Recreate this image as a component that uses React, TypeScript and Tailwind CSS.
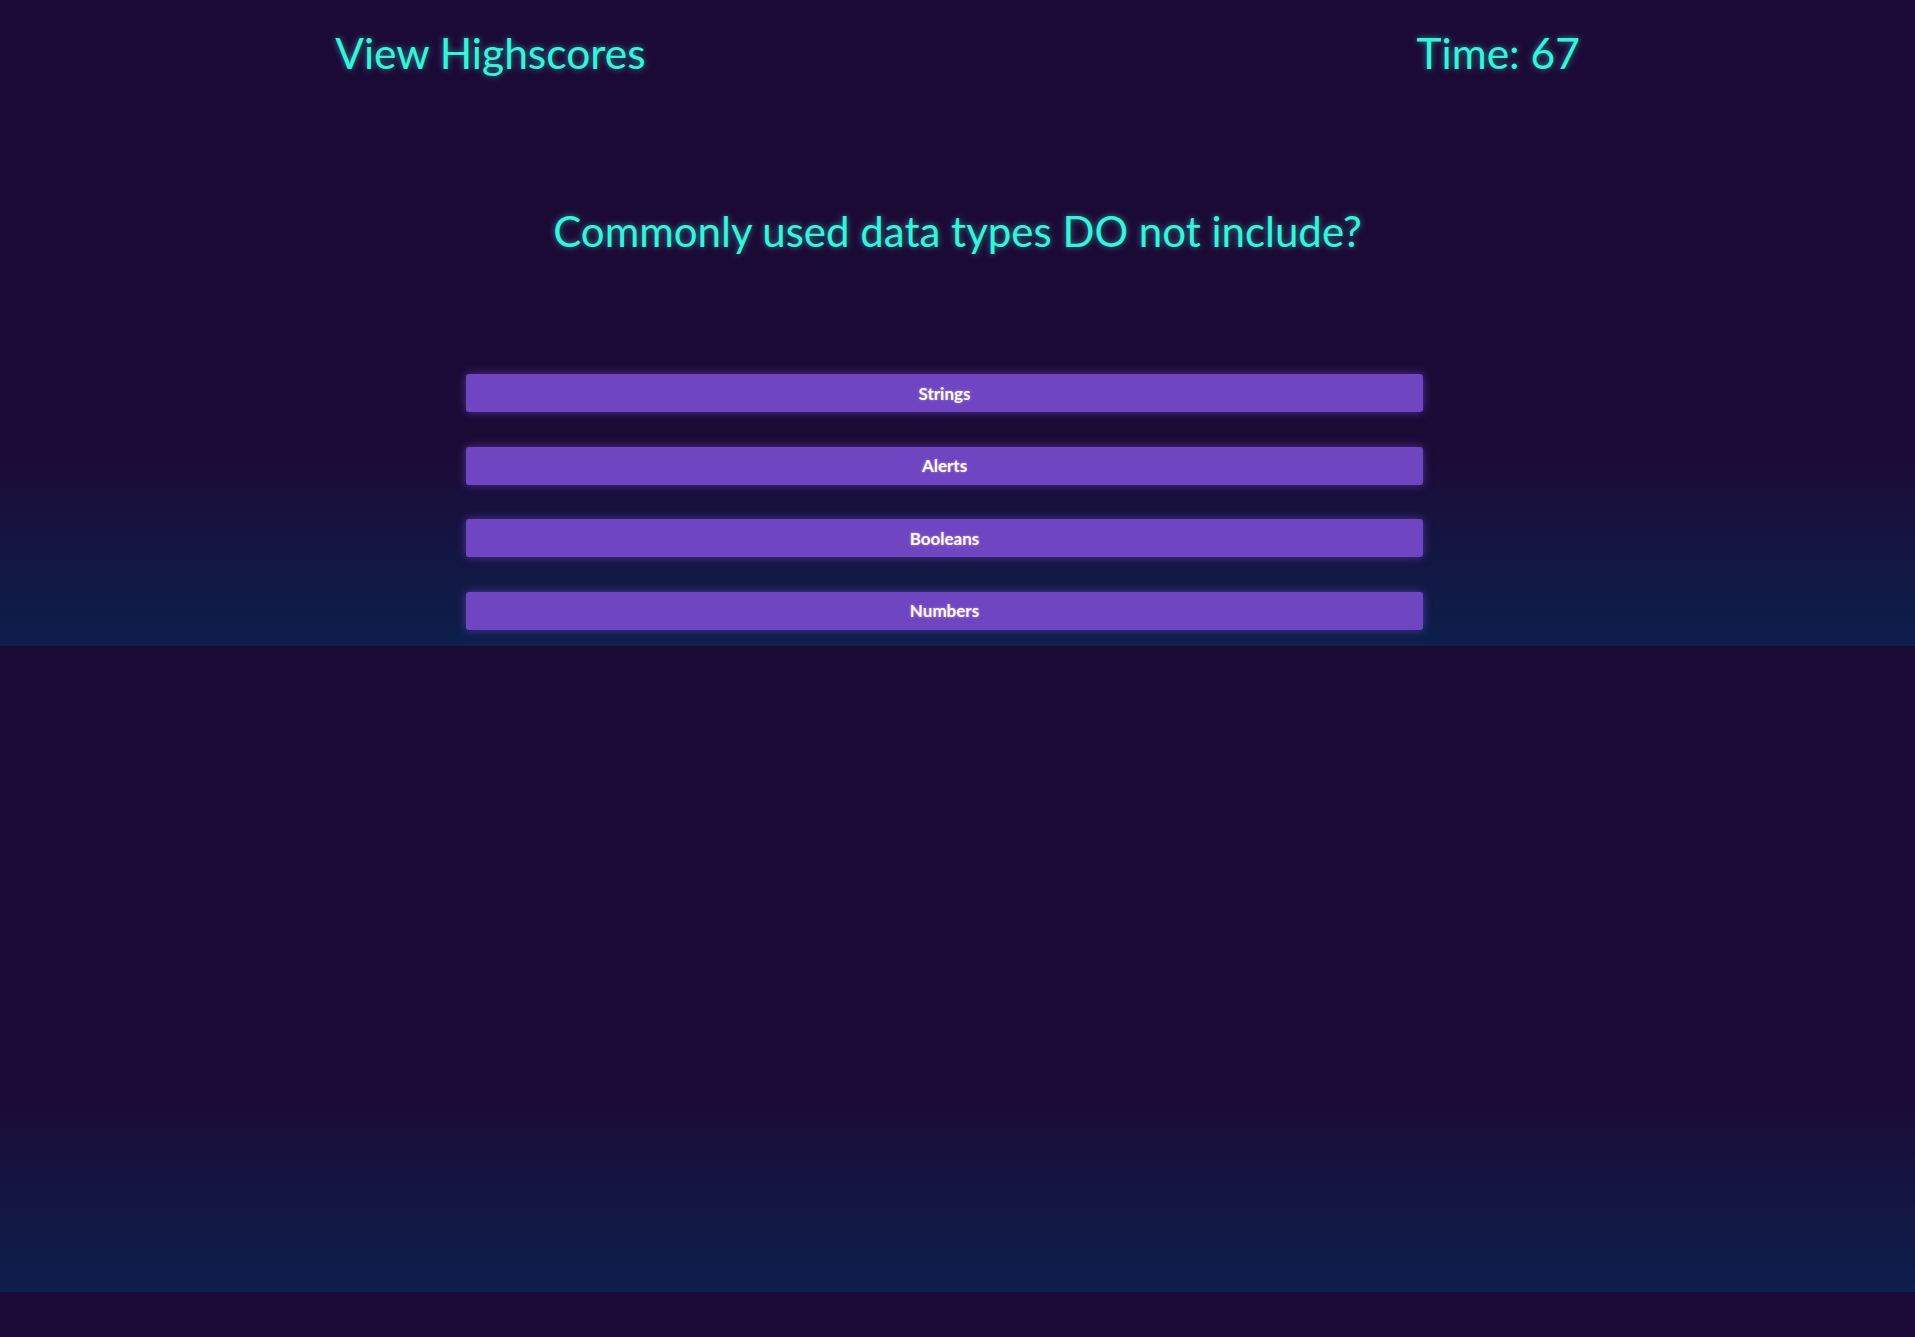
import React from "react";

const answers = ["Strings", "Alerts", "Booleans", "Numbers"];

export default function App() {
  return (
    <div
      className="min-h-screen w-full bg-[#1b0a35] bg-[linear-gradient(to_bottom,#1c0a36_0%,#1c0a36_68%,#0d1f4b_100%)] bg-[length:100%_646px] bg-repeat"
      style={{ fontFamily: "Lato, 'Open Sans', sans-serif" }}
    >
      <div className="h-[646px] flex flex-col">
        <header className="mx-auto w-[65%] flex justify-between pt-[27px] text-[42.5px] leading-[1.2] text-[#36f4dc] [text-shadow:0_0_6px_rgba(54,244,220,0.55)]">
          <a className="cursor-pointer">View Highscores</a>
          <span>Time: 67</span>
        </header>
        <h1 className="mt-[128px] text-center text-[42px] leading-[1.2] font-normal text-[#36f4dc] [text-shadow:0_0_6px_rgba(54,244,220,0.55)]">
          Commonly used data types DO not include?
        </h1>
        <div className="mt-[118px] ml-[calc(25%-13px)] w-1/2 flex flex-col gap-[34.5px]">
          {answers.map((a) => (
            <button
              key={a}
              className="h-[38px] w-full rounded-[3px] bg-[#7045c1] text-white font-bold text-[17px] shadow-[0_0_10px_rgba(125,80,220,0.55)] [text-shadow:0_0_3px_rgba(255,200,255,0.5)]"
            >
              {a}
            </button>
          ))}
        </div>
      </div>
    </div>
  );
}
